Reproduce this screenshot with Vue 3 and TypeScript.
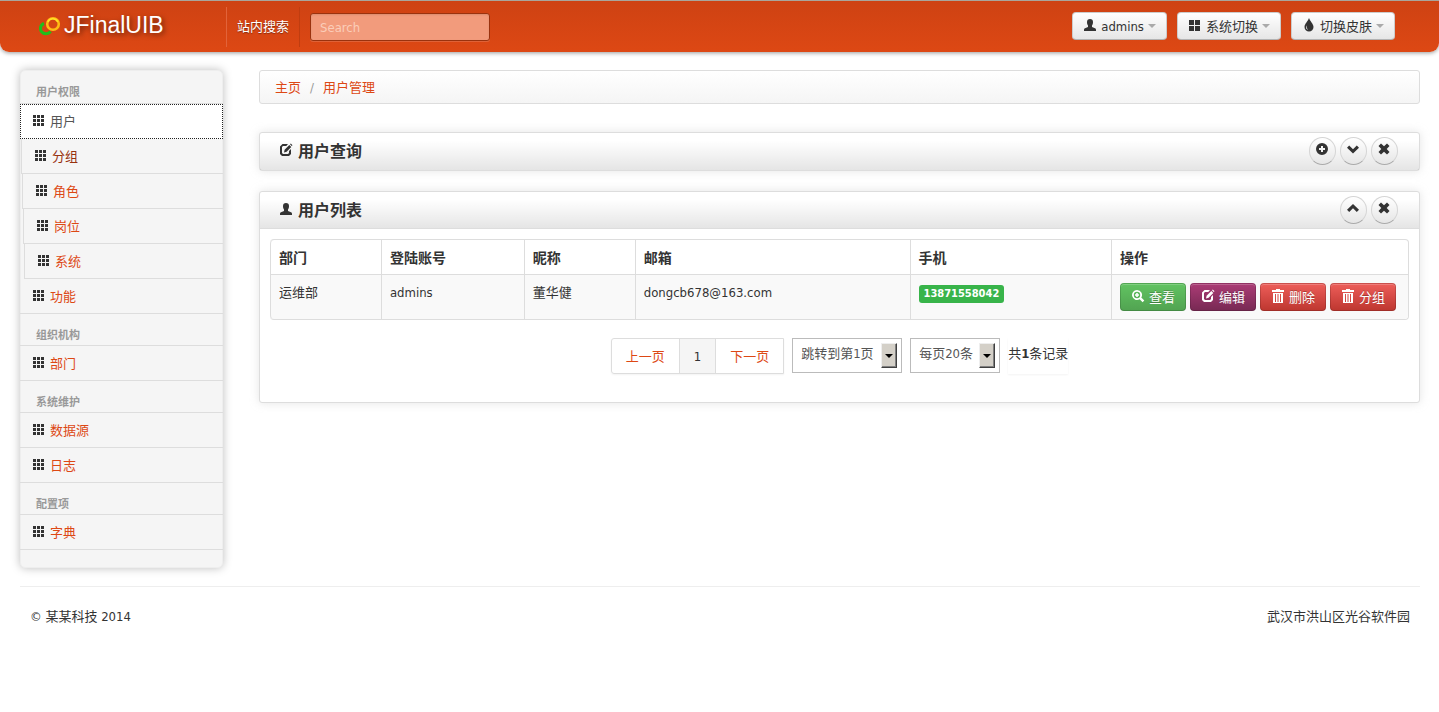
<script setup lang="ts">
import { h, ref, type FunctionalComponent } from 'vue'

type IconName = 'th' | 'thLarge' | 'user' | 'tint' | 'edit' | 'plus' | 'down' | 'up' | 'remove' | 'zoom' | 'trash'

const paths: Record<IconName, string> = {
  th: 'M1 1h3v3H1zM5 1h3v3H5zM9 1h3v3H9zM1 5h3v3H1zM5 5h3v3H5zM9 5h3v3H9zM1 9h3v3H1zM5 9h3v3H5zM9 9h3v3H9z',
  thLarge: 'M1 2h5v5H1zM7 2h5v5H7zM1 8h5v5H1zM7 8h5v5H7z',
  user: 'M7 1C5 1 4 2.3 4 4c0 1.500.3 2.600 1 3.500V9L2 10.200C1.200 10.500 1 11 1 12v1h12v-1c0-1-.2-1.500-1-1.800L9 9V7.500c.7-.9 1-2 1-3.500 0-1.700-1-3-3-3z',
  tint: 'M7 0C6.200 2.800 2.500 6 2.500 9a4.500 4.500 0 0 0 9 0C11.500 6 7.800 2.800 7 0zM5 7.500c-.8 1.800-.2 3.200 1.200 4C4 11.500 3.300 9 5 7.500z',
  edit: 'M3.500 1H9L7.300 3H4L3 4v6l1 1h5l1-1V8l2-2v5l-2 2H3l-2-2V3.500zM5 9.500l.6-2.700L10.300 2l2 2-4.700 4.800zM11 1.300l.8-.8 1.700 1.700-.8.8z',
  plus: 'M7 1a6 6 0 1 0 0 12A6 6 0 0 0 7 1zM6 4h2v2h2v2H8v2H6V8H4V6h2z',
  down: 'M3.200 3.500 7 7.200l3.800-3.700 2.200 2.200-6 5.800-6-5.800z',
  up: 'M3.200 11 7 7.300l3.800 3.700L13 8.800 7 3 1 8.800z',
  remove: 'M4 1.500 7 4.300l3-2.800L12.500 4 9.700 7l2.800 3-2.500 2.500-3-2.800-3 2.800L1.500 10l2.800-3L1.500 4z',
  zoom: 'M6 1a5 5 0 1 0 2.600 9.300l3 3 1.700-1.700-3-3A5 5 0 0 0 6 1zm0 1.800a3.200 3.200 0 1 1 0 6.400 3.200 3.200 0 0 1 0-6.400zM5.200 4h1.600v1.200H8v1.600H6.800V8H5.200V6.800H4V5.200h1.200z',
  trash: 'M5 0h4v1h4v2H1V1h4zM2 4h10v10H2zM4 5v8h1V5zm2.500 0v8h1V5zM9 5v8h1V5z',
}

const Icon: FunctionalComponent<{ name: IconName }> = (props) =>
  h('svg', { width: 14, height: 14, viewBox: '0 0 14 14', 'aria-hidden': 'true' }, [
    h('path', { d: paths[props.name], fill: 'currentColor', 'fill-rule': 'evenodd' }),
  ])
Icon.props = ['name']

interface Entry { label: string; state?: string }
const menu: { title: string; items: Entry[] }[] = [
  {
    title: '用户权限',
    items: [
      { label: '用户', state: 'active' },
      { label: '分组', state: 'shift-1 hover' },
      { label: '角色', state: 'shift-2' },
      { label: '岗位', state: 'shift-3' },
      { label: '系统', state: 'shift-4' },
      { label: '功能' },
    ],
  },
  { title: '组织机构', items: [{ label: '部门' }] },
  { title: '系统维护', items: [{ label: '数据源' }, { label: '日志' }] },
  { title: '配置项', items: [{ label: '字典' }] },
]

const tools: { icon: IconName; label: string }[] = [
  { icon: 'user', label: 'admins' },
  { icon: 'thLarge', label: '系统切换' },
  { icon: 'tint', label: '切换皮肤' },
]

const columns = ['部门', '登陆账号', '昵称', '邮箱', '手机', '操作']
const rows = [
  { dept: '运维部', account: 'admins', nick: '董华健', email: 'dongcb678@163.com', phone: '13871558042' },
]
const actions: { icon: IconName; label: string; kind: string }[] = [
  { icon: 'zoom', label: '查看', kind: 'green' },
  { icon: 'edit', label: '编辑', kind: 'purple' },
  { icon: 'trash', label: '删除', kind: 'red' },
  { icon: 'trash', label: '分组', kind: 'red' },
]
const search = ref('')
</script>

<template>
  <div class="page">
    <header class="navbar">
      <a class="brand" href="#">
        <svg width="22" height="20" viewBox="0 0 22 20" aria-hidden="true">
          <path d="M5 7.500C1 9 .8 13.500 2.600 15.700c2.400 2.900 6.800 2.500 9-.2" fill="none" stroke="#1fbf1b" stroke-width="3" />
          <circle cx="14" cy="8" r="5.800" fill="none" stroke="#ffb914" stroke-width="2.600" />
          <path d="M8.800 6c2-4 7.500-4.500 10-.2" fill="none" stroke="#ffe226" stroke-width="1.500" />
        </svg>
        <span>JFinalUIB</span>
      </a>
      <label class="search-label" for="site-search">站内搜索</label>
      <input id="site-search" v-model="search" class="search" type="text" placeholder="Search">
      <div class="tools">
        <button v-for="tool in tools" :key="tool.label" class="tool" type="button">
          <Icon :name="tool.icon" />
          <span>{{ tool.label }}</span>
          <i class="caret"></i>
        </button>
      </div>
    </header>

    <div class="body">
      <nav class="sidebar">
        <template v-for="group in menu" :key="group.title">
          <h2>{{ group.title }}</h2>
          <ul>
            <li v-for="item in group.items" :key="item.label" :class="item.state">
              <a href="#"><Icon name="th" /><span>{{ item.label }}</span></a>
            </li>
          </ul>
        </template>
      </nav>

      <main class="main">
        <div class="breadcrumb">
          <a href="#">主页</a><span>/</span><a href="#">用户管理</a>
        </div>

        <section class="box">
          <div class="box-head">
            <h2><Icon name="edit" /><span>用户查询</span></h2>
            <div class="rounds">
              <button type="button" aria-label="添加"><Icon name="plus" /></button>
              <button type="button" aria-label="展开"><Icon name="down" /></button>
              <button type="button" aria-label="关闭"><Icon name="remove" /></button>
            </div>
          </div>
        </section>

        <section class="box">
          <div class="box-head open">
            <h2><Icon name="user" /><span>用户列表</span></h2>
            <div class="rounds">
              <button type="button" aria-label="收起"><Icon name="up" /></button>
              <button type="button" aria-label="关闭"><Icon name="remove" /></button>
            </div>
          </div>
          <div class="box-content">
            <table>
              <colgroup>
                <col class="c-dept"><col class="c-account"><col class="c-nick">
                <col class="c-email"><col class="c-phone"><col>
              </colgroup>
              <thead>
                <tr><th v-for="column in columns" :key="column">{{ column }}</th></tr>
              </thead>
              <tbody>
                <tr v-for="row in rows" :key="row.account">
                  <td>{{ row.dept }}</td>
                  <td>{{ row.account }}</td>
                  <td>{{ row.nick }}</td>
                  <td>{{ row.email }}</td>
                  <td><span class="badge">{{ row.phone }}</span></td>
                  <td>
                    <div class="actions">
                      <button v-for="action in actions" :key="action.label" type="button" :class="action.kind">
                        <Icon :name="action.icon" /><span>{{ action.label }}</span>
                      </button>
                    </div>
                  </td>
                </tr>
              </tbody>
            </table>

            <div class="pager">
              <div class="pages">
                <a href="#">上一页</a>
                <a href="#" class="current">1</a>
                <a href="#">下一页</a>
              </div>
              <div class="picker jump">
                <select aria-label="跳转页码"><option>跳转到第1页</option></select>
                <span class="arrow"><i></i></span>
              </div>
              <div class="picker size">
                <select aria-label="每页条数"><option>每页20条</option></select>
                <span class="arrow"><i></i></span>
              </div>
              <span class="total">共<b>1</b>条记录</span>
            </div>
          </div>
        </section>
      </main>
    </div>

    <footer class="footer">
      <span>© 某某科技 2014</span>
      <span>武汉市洪山区光谷软件园</span>
    </footer>
  </div>
</template>

<style>
body {
  margin: 0;
  background: #fff;
}
</style>

<style scoped>
.page {
  font: 13px/20px "DejaVu Sans Condensed", "Noto Sans CJK SC", sans-serif;
  color: #333;
}
.page * {
  box-sizing: border-box;
}
a {
  color: #dd4814;
  text-decoration: none;
}
button,
input,
select {
  font: inherit;
  margin: 0;
}
svg {
  flex: none;
  display: block;
}
h2,
ul {
  margin: 0;
  padding: 0;
  list-style: none;
}

.navbar {
  display: flex;
  align-items: center;
  height: 52px;
  padding: 0 44px 0 39px;
  border-top: 1px solid #a9a59c;
  border-radius: 0 0 9px 9px;
  background: linear-gradient(#ce4213, #dd4814);
  box-shadow: 0 1px 4px rgba(0, 0, 0, 0.4);
}
.brand {
  display: flex;
  align-items: center;
  gap: 3px;
  width: 187px;
  padding-bottom: 2px;
  color: #fff;
  font: 23px/26px "Liberation Sans", Arial, sans-serif;
  text-shadow: 2px 2px 5px rgba(0, 0, 0, 0.5);
}
.brand span {
  padding-bottom: 2px;
}
.search-label {
  height: 40px;
  padding: 0 10px;
  line-height: 40px;
  color: #fff;
  text-shadow: 0 1px 1px rgba(0, 0, 0, 0.4);
  border-left: 1px solid #e2633a;
  border-right: 1px solid #c03d10;
}
.search {
  width: 180px;
  height: 28px;
  margin-left: 10px;
  padding: 4px 9px 2px;
  color: #fff;
  background: #f29b7c;
  border: 1px solid #9a320e;
  border-radius: 3px;
  box-shadow: inset 0 1px 2px rgba(0, 0, 0, 0.1), 0 1px 0 rgba(255, 255, 255, 0.15);
}
.search::placeholder {
  color: #fbcdb9;
  opacity: 1;
}
.tools {
  display: flex;
  gap: 10px;
  margin-left: auto;
  padding-bottom: 2px;
}
.tool {
  display: flex;
  align-items: center;
  height: 28px;
  padding: 0 10px;
  color: #333;
  background: linear-gradient(#fff, #e6e6e6);
  border: 1px solid #ccc;
  border-bottom-color: #b3b3b3;
  border-radius: 4px;
}
.tool svg {
  margin: 0 4px 2px 0;
}
.tool span {
  padding-top: 2px;
}
.caret {
  margin-left: 4px;
  border: 4px solid transparent;
  border-top-color: #aaa;
  border-bottom: 0;
}

.body {
  display: flex;
  align-items: flex-start;
  gap: 36px;
  padding: 18px 19px 0 20px;
}
.sidebar {
  flex: 0 0 203px;
  padding-bottom: 17px;
  background: #f5f5f5;
  border: 1px solid #eee;
  border-radius: 5px;
  box-shadow: 0 0 10px #bdbdbd;
}
.sidebar h2 {
  height: 32px;
  padding: 14px 15px 0;
  font-size: 11px;
  line-height: 16px;
  font-weight: bold;
  color: #999;
}
.sidebar ul {
  margin: 0 -1px;
  border-top: 1px solid #ddd;
}
.sidebar h2 + ul {
  margin-top: -1px;
}
.sidebar h2:first-child {
  height: 33px;
}
.sidebar li a {
  display: flex;
  align-items: center;
  height: 35px;
  padding: 0 12px;
  border-bottom: 1px solid #ddd;
}
.sidebar li svg {
  margin: 0 4px 1px 0;
  color: #333;
}
.sidebar li span {
  padding-top: 1px;
}
.sidebar .active a {
  color: #555;
  background: #fff;
  border: 1px dotted #222;
  padding: 0 11px;
}
.sidebar .hover a {
  color: #97310e;
}
.shift-1,
.shift-2,
.shift-3,
.shift-4 {
  border-left: 1px solid #ddd;
}
.shift-1 {
  margin-left: 1px;
}
.shift-2 {
  margin-left: 2px;
}
.shift-3 {
  margin-left: 3px;
}
.shift-4 {
  margin-left: 4px;
}

.main {
  flex: 1;
  min-width: 0;
}
.breadcrumb {
  display: flex;
  height: 34px;
  padding: 7px 15px;
  margin-bottom: 28px;
  background: linear-gradient(#fff, #f5f5f5);
  border: 1px solid #ddd;
  border-radius: 3px;
}
.breadcrumb span {
  padding: 0 9px;
  color: #999;
}
.box {
  margin-bottom: 20px;
  background: #fff;
  border: 1px solid #ddd;
  border-radius: 3px;
  box-shadow: 0 0 10px rgba(189, 189, 189, 0.4);
}
.box-head {
  display: flex;
  justify-content: space-between;
  height: 37px;
  padding: 4px 21px 0 19px;
  background: linear-gradient(rgba(255, 255, 255, 0) 20%, rgba(0, 0, 0, 0.1));
}
.box-head.open {
  border-bottom: 1px solid #ddd;
}
.box-head h2 {
  display: flex;
  align-items: center;
  gap: 5px;
  height: 30px;
  font-size: 16px;
  line-height: 30px;
  font-weight: bold;
}
.box-head h2 svg {
  margin-bottom: 4px;
}
.rounds {
  display: flex;
  gap: 4px;
}
.rounds button {
  display: flex;
  justify-content: center;
  width: 27px;
  height: 28px;
  padding: 4px 1px 0 0;
  color: #333;
  background: linear-gradient(#fff, #e6e6e6);
  border: 1px solid #d5d5d5;
  border-bottom-color: #aaa;
  border-radius: 50%;
}
.box-content {
  padding: 10px 10px 28px;
}

table {
  width: 100%;
  table-layout: fixed;
  border: 1px solid #ddd;
  border-left: 0;
  border-radius: 4px;
  border-spacing: 0;
}
.c-dept,
.c-nick {
  width: 9.75%;
}
.c-account {
  width: 12.55%;
}
.c-email {
  width: 24.15%;
}
.c-phone {
  width: 17.7%;
}
th,
td {
  padding: 8px;
  text-align: left;
  vertical-align: top;
  border-left: 1px solid #ddd;
}
th {
  height: 34px;
  padding: 8px 8px 6px;
  font-size: 14px;
  font-weight: bold;
}
td {
  background: #f9f9f9;
  border-top: 1px solid #ddd;
}
th:first-child {
  border-top-left-radius: 4px;
}
td:first-child {
  border-bottom-left-radius: 4px;
}
td:last-child {
  border-bottom-right-radius: 4px;
}
.badge {
  display: inline-block;
  padding: 2px 5px;
  font-size: 11px;
  line-height: 14px;
  font-weight: bold;
  color: #fff;
  background: #38b44a;
  border-radius: 3px;
}
.actions {
  display: flex;
  gap: 4px;
}
.actions button {
  display: flex;
  align-items: center;
  justify-content: center;
  gap: 4px;
  width: 66px;
  height: 28px;
  padding: 0;
  color: #fff;
  text-shadow: 0 -1px 0 rgba(0, 0, 0, 0.25);
  border: 1px solid rgba(0, 0, 0, 0.15);
  border-radius: 4px;
  box-shadow: inset 0 1px 0 rgba(255, 255, 255, 0.2);
}
.actions svg {
  margin-bottom: 3px;
}
.actions span {
  padding-top: 2px;
}
.actions .green {
  background: linear-gradient(#62c462, #51a351) border-box;
}
.actions .purple {
  background: linear-gradient(#ac3c76, #772953) border-box;
}
.actions .red {
  background: linear-gradient(#ee5f5b, #bd362f) border-box;
}

.pager {
  display: flex;
  justify-content: center;
  align-items: flex-start;
  gap: 8px;
  margin-top: 18px;
}
.pages {
  display: flex;
  border: 1px solid #ddd;
  border-radius: 3px 0 0 3px;
  box-shadow: 0 1px 2px rgba(0, 0, 0, 0.05);
}
.pages a {
  height: 34px;
  padding: 1px 14px 0;
  line-height: 34px;
}
.pages .current {
  color: #333;
  background: #f5f5f5;
  border: solid #ddd;
  border-width: 0 1px;
}
.picker {
  position: relative;
}
.jump {
  width: 110px;
}
.size {
  width: 90px;
}
.picker select {
  display: block;
  width: 100%;
  height: 35px;
  padding: 0 24px 4px 8px;
  color: #555;
  background: #fff;
  border: 1px solid #bbb;
  border-radius: 0;
  appearance: none;
}
.arrow {
  position: absolute;
  top: 5px;
  right: 5px;
  display: flex;
  align-items: center;
  justify-content: center;
  width: 16px;
  height: 25px;
  background: #d4d0c8;
  border: 1px solid;
  border-color: #eee #404040 #404040 #eee;
  box-shadow: inset -1px -1px 0 #808080;
  pointer-events: none;
}
.arrow i {
  border: 4px solid transparent;
  border-top-color: #000;
  border-bottom: 0;
}
.total {
  height: 36px;
  padding-top: 6px;
  box-shadow: 0 1px 2px rgba(0, 0, 0, 0.05);
}

.footer {
  display: flex;
  justify-content: space-between;
  margin: 18px 19px 0 20px;
  padding: 20px 10px;
  border-top: 1px solid #eee;
}
</style>
